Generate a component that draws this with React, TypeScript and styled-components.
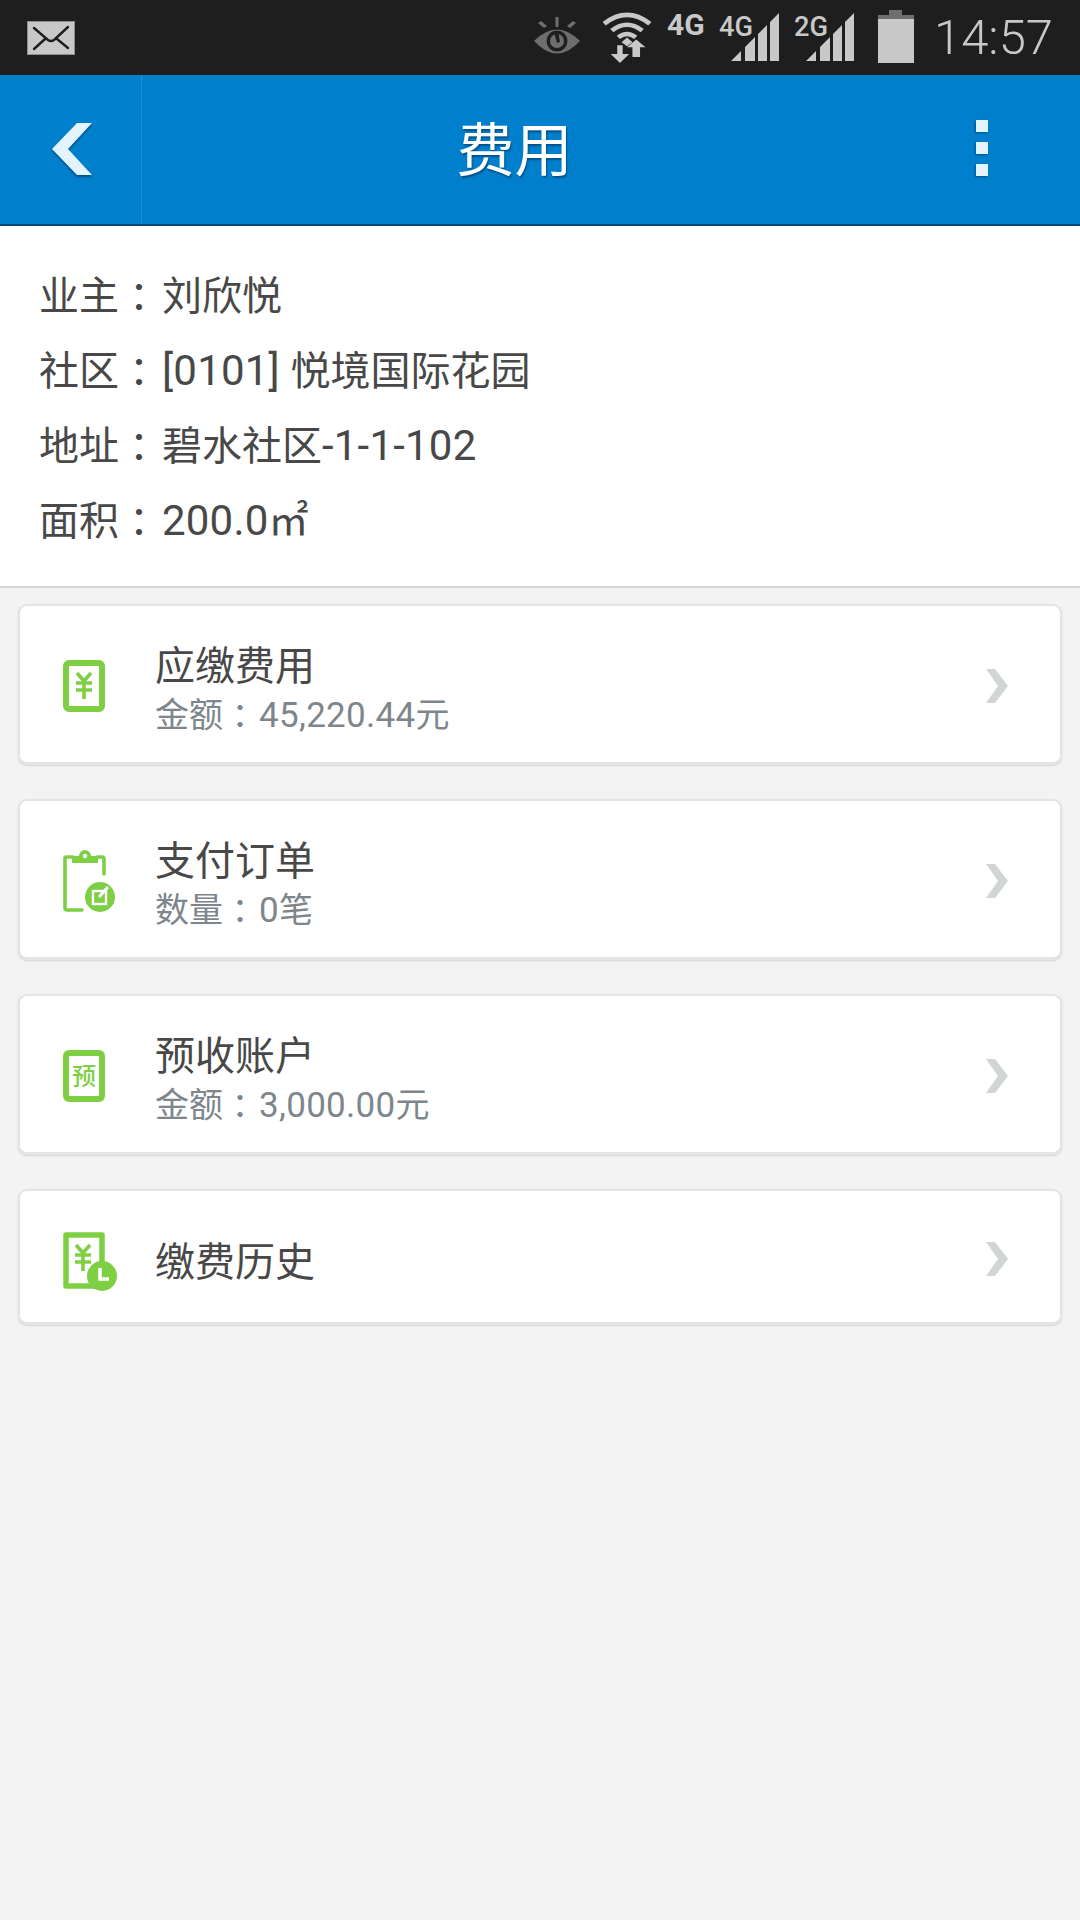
import React from 'react';
import styled, { createGlobalStyle } from 'styled-components';

const GlobalStyle = createGlobalStyle`
	html, body {
		margin: 0;
		padding: 0;
		background: #f3f3f3;
	}
	body {
		font-family: Roboto, "Noto Sans CJK SC", sans-serif;
	}
`;

const Page = styled.div`
	width: 1080px;
	height: 1920px;
	background: #f3f3f3;
	overflow: hidden;
`;

const StatusBar = styled.div`
	height: 75px;
	background: #1e1e1e;
	display: flex;
	align-items: center;
	padding: 0 27px 0 27px;
	box-sizing: border-box;
`;
const StatusIcons = styled.div`
	margin-left: auto;
	display: flex;
	align-items: center;
`;
const StatusTime = styled.div`
	font-size: 49px;
	line-height: 75px;
	color: #c8c8c8;
	font-weight: 300;
	margin-left: 20px;
`;
const StatusSvg = styled.svg<{ $gap?: number }>`
	display: block;
	flex: none;
	margin-top: 5px;
	margin-left: ${(p) => p.$gap ?? 0}px;
`;
const NetLabel = styled.div`
	flex: none;
	width: 40px;
	height: 60px;
	margin: 5px 0 0 15px;
	font-size: 30px;
	font-weight: 700;
	line-height: 29px;
	color: #c8c8c8;
`;

const Header = styled.div`
	height: 151px;
	background: #0080cc;
	border-bottom: 2px solid #0a4a7a;
	box-sizing: border-box;
	display: flex;
	align-items: stretch;
`;
const BackButton = styled.div`
	width: 142px;
	border-right: 1px solid #1a8dd3;
	box-sizing: border-box;
	display: flex;
	align-items: center;
	padding: 3px 0 0 50px;
`;
const Title = styled.div`
	flex: 1;
	text-align: center;
	font-size: 58px;
	line-height: 152px;
	color: #fff;
	text-shadow: 1px 2px 2px #00508a;
`;
const MenuButton = styled.div`
	width: 193px;
	display: flex;
	align-items: center;
	justify-content: center;
	padding: 0 3px 3px 0;
	box-sizing: border-box;
`;

const Info = styled.div`
	background: #fff;
	height: 362px;
	border-bottom: 2px solid #d6d6d6;
	box-sizing: border-box;
	padding: 33px 0 0 39px;
`;
const InfoRow = styled.div`
	display: flex;
	align-items: baseline;
	height: 75px;
	font-size: 40px;
	line-height: 75px;
	color: #484848;
`;
const InfoLabel = styled.span`
	width: 123px;
	flex: none;
`;
// the reference sets the full width colon in the middle of its cell
const Colon = styled.span`
	font-family: "Noto Sans CJK TC", sans-serif;
	line-height: 0;
	vertical-align: -2px;
`;
const InfoNum = styled.span`
	font-size: 42px;
	line-height: 0;
	letter-spacing: 0.2px;
`;

const CardList = styled.div`
	padding: 16px 18px 0;
	display: flex;
	flex-direction: column;
`;
const Card = styled.div<{ $short?: boolean }>`
	height: ${(p) => (p.$short ? 136 : 161)}px;
	margin-bottom: 34px;
	background: #fff;
	border: 2px solid #e4e4e4;
	border-bottom-width: 3px;
	border-radius: 9px;
	box-shadow: 0 1px 2px #d4d4d4;
	box-sizing: border-box;
	display: flex;
	align-items: center;
	padding-left: 43px;
`;
const CardIcon = styled.svg`
	flex: none;
	display: block;
	width: 56px;
	height: 70px;
`;
const CardText = styled.div`
	margin-left: 36px;
	flex: 1;
	padding-top: 12px;
`;
const CardTitle = styled.div`
	font-size: 40px;
	line-height: 50px;
	color: #484848;
`;
const CardSub = styled.div`
	font-size: 34px;
	line-height: 47px;
	color: #7e868c;
`;
const SubNum = styled.span`
	font-size: 35px;
	line-height: 0;
	margin-left: 2px;
	letter-spacing: 0.3px;
`;
const Chevron = styled.svg`
	flex: none;
	display: block;
	margin: 4px 51px 0 0;
`;

const GREEN = '#7fcf45';
const LIGHT = '#c8c8c8';

const MailIcon = () => (
	<svg width="48" height="34" viewBox="0 0 48 34">
		<rect x="0.5" y="0.5" width="47" height="33" fill={LIGHT} stroke="#8c8c8c" />
		<path d="M7 7 L21 19 Q24 21 27 19 L41 6 M7 28 L18 18 M30 18 L41 27" fill="none" stroke="#1e1e1e" strokeWidth="2.4" strokeLinecap="round" />
	</svg>
);

const EyeIcon = () => (
	<StatusSvg width="46" height="60" viewBox="0 0 46 60">
		<g fill="#6e6e6e">
			<path d="M0 31 Q23 8 46 31 Q23 56 0 31 Z" />
			<rect x="21.500" y="7" width="3" height="10" />
			<path d="M4 13 l3-2 6 5-3 2 Z M42 13 l-3-2-6 5 3 2 Z" />
		</g>
		<circle cx="23" cy="31" r="10.500" fill="#1e1e1e" />
		<circle cx="23" cy="31" r="7" fill="#6e6e6e" />
		<path d="M20 22 L24 21 L26 32 L23 33 Z" fill="#1e1e1e" />
	</StatusSvg>
);

const WifiIcon = () => (
	<StatusSvg $gap={22} width="50" height="60" viewBox="0 0 50 60">
		<g transform="scale(1.087 0.980)">
			<g fill="none" stroke={LIGHT} strokeWidth="4.5">
				<path d="M2 14 Q23 -4 44 14" />
				<path d="M9 21 Q23 9 37 21" />
				<path d="M15 28 Q23 21 31 28" />
			</g>
			<path d="M18 33 L23 28 L28 33 L23 37 Z" fill={LIGHT} />
			<path d="M14 36 h5 v9 h6 l-8.500 9 l-8.500-9 h6 Z" fill={LIGHT} />
			<path d="M28 48 v-10 h-5 l8.500-8 l8.500 8 h-5 v10 Z" fill={LIGHT} />
		</g>
	</StatusSvg>
);

const SignalIcon = ({ label, gap }: { label: string; gap: number }) => (
	<StatusSvg $gap={gap} width="60" height="60" viewBox="0 0 60 60">
		<text x="0" y="26" fontFamily="Roboto" fontWeight="500" fontSize="28" textLength="34" lengthAdjust="spacingAndGlyphs" fill={LIGHT}>
			{label}
		</text>
		<path d="M12 51 L22 41 V51 Z M26 51 V37 L36 27 V51 Z M39 51 V24 L48 15 V51 Z M51 51 V12 L60 3 V51 Z" fill={LIGHT} />
	</StatusSvg>
);

const BatteryIcon = () => (
	<StatusSvg $gap={24} width="36" height="60" viewBox="0 0 36 60">
		<rect x="11" y="0" width="13" height="5" fill="#6e6e6e" />
		<rect x="0" y="5" width="36" height="4" fill="#6e6e6e" />
		<rect x="0" y="9" width="36" height="44" fill={LIGHT} />
	</StatusSvg>
);

const YenStrokes = ({ x = 0, y = 0 }: { x?: number; y?: number }) => (
	<g transform={`translate(${x} ${y})`} fill="none" stroke={GREEN} strokeWidth="3.600">
		<path d="M3 0 L10 8 L17 0" />
		<path d="M2 10 H18 M2 17 H18 M10 8 V26" />
	</g>
);

const FeeIcon = () => (
	<CardIcon viewBox="0 -2 56 70">
		<rect x="3" y="12" width="36" height="46" rx="3" fill="#fff" stroke={GREEN} strokeWidth="6" />
		<YenStrokes x={11} y={22} />
	</CardIcon>
);

const OrderIcon = () => (
	<CardIcon viewBox="0 -2 56 70">
		<path d="M10 11 H3 Q2 11 2 12 V62 Q2 64 4 64 H19 M34 11 H39 Q41 11 41 13 V28" fill="none" stroke={GREEN} strokeWidth="3.600" strokeLinecap="round" />
		<path d="M9 17 V12 Q9 10 11 10 H16 A6 6 0 0 1 28 10 H33 Q35 10 35 12 V17 Z" fill={GREEN} />
		<circle cx="22" cy="10" r="2.200" fill="#fff" />
		<circle cx="37" cy="51" r="15" fill={GREEN} />
		<rect x="30" y="45" width="13" height="13" fill="none" stroke="#fff" strokeWidth="2.400" />
		<path d="M36 51 L45 41" stroke="#fff" strokeWidth="3" />
	</CardIcon>
);

const PrepayIcon = () => (
	<CardIcon viewBox="0 -2 56 70">
		<rect x="3" y="12" width="36" height="46" rx="3" fill="#fff" stroke={GREEN} strokeWidth="6" />
		<text x="21" y="44" textAnchor="middle" fontFamily="'Noto Sans CJK SC'" fontWeight="500" fontSize="24" fill={GREEN}>
			预
		</text>
	</CardIcon>
);

const HistoryIcon = () => (
	<CardIcon viewBox="0 -2 56 70">
		<path d="M32 62 H3 V11 H39 V40" fill="none" stroke={GREEN} strokeWidth="5.500" strokeLinejoin="round" />
		<YenStrokes x={10} y={21} />
		<circle cx="39" cy="52" r="15" fill={GREEN} />
		<path d="M37 44 V55 H46" fill="none" stroke="#fff" strokeWidth="3.500" />
	</CardIcon>
);

const items = [
	{ title: '应缴费用', label: '金额', value: '45,220.44', unit: '元', Icon: FeeIcon },
	{ title: '支付订单', label: '数量', value: '0', unit: '笔', Icon: OrderIcon },
	{ title: '预收账户', label: '金额', value: '3,000.00', unit: '元', Icon: PrepayIcon },
	{ title: '缴费历史', Icon: HistoryIcon },
];

export default function App() {
	return (
		<Page>
			<GlobalStyle />
			<StatusBar>
				<MailIcon />
				<StatusIcons>
					<EyeIcon />
					<WifiIcon />
					<NetLabel>4G</NetLabel>
					<SignalIcon label="4G" gap={12} />
					<SignalIcon label="2G" gap={15} />
					<BatteryIcon />
					<StatusTime>14:57</StatusTime>
				</StatusIcons>
			</StatusBar>
			<Header>
				<BackButton>
					<svg width="44" height="56" viewBox="0 0 44 56" style={{ filter: 'drop-shadow(0 2px 1px #00508a)' }}>
						<path d="M2 26 L27 0 H42 L18 26 L42 52 H27 Z" fill="#e3f4ff" />
					</svg>
				</BackButton>
				<Title>费用</Title>
				<MenuButton>
					<svg width="16" height="60" viewBox="0 0 16 60" style={{ filter: 'drop-shadow(-1px 1px 1px #00508a)' }}>
						<rect x="2" y="2" width="12" height="12" fill="#e3f4ff" />
						<rect x="2" y="24" width="12" height="12" fill="#e3f4ff" />
						<rect x="2" y="46" width="12" height="12" fill="#e3f4ff" />
					</svg>
				</MenuButton>
			</Header>
			<Info>
				<InfoRow><InfoLabel>业主<Colon>：</Colon></InfoLabel><span>刘欣悦</span></InfoRow>
				<InfoRow><InfoLabel>社区<Colon>：</Colon></InfoLabel><span><InfoNum>[0101] </InfoNum>悦境国际花园</span></InfoRow>
				<InfoRow><InfoLabel>地址<Colon>：</Colon></InfoLabel><span>碧水社区<InfoNum>-1-1-102</InfoNum></span></InfoRow>
				<InfoRow><InfoLabel>面积<Colon>：</Colon></InfoLabel><span><InfoNum>200.0</InfoNum>㎡</span></InfoRow>
			</Info>
			<CardList>
				{items.map(({ title, label, value, unit, Icon }) => (
					<Card key={title} $short={!label}>
						<Icon />
						<CardText>
							<CardTitle>{title}</CardTitle>
							{label && (
								<CardSub>
									{label}<Colon>：</Colon><SubNum>{value}</SubNum>{unit}
								</CardSub>
							)}
						</CardText>
						<Chevron width="24" height="36" viewBox="0 0 24 36">
							<path d="M1 1 H10 L23 18 L10 35 H1 L13 18 Z" fill="#d2d5d6" />
						</Chevron>
					</Card>
				))}
			</CardList>
		</Page>
	);
}
